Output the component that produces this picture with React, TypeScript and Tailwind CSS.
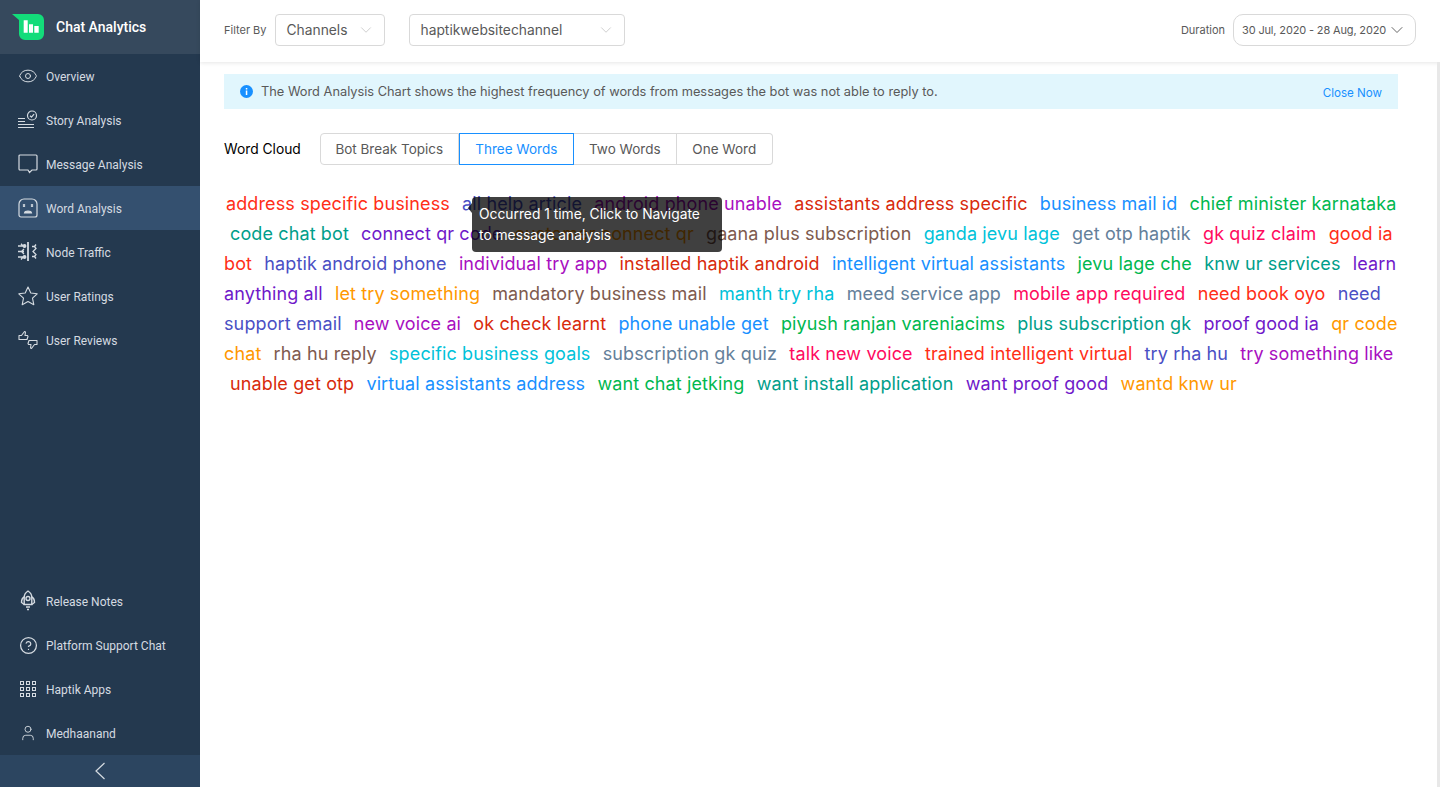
import { ChevronDown, CircleHelp, Eye, User } from "lucide-react";
import type { ReactNode } from "react";

const COLORS = [
  "text-[#ff2e17]",
  "text-[#4a4fc4]",
  "text-[#a80fc0]",
  "text-[#d82a0c]",
  "text-[#1890ff]",
  "text-[#00b84f]",
  "text-[#009e8a]",
  "text-[#6f19c9]",
  "text-[#ff9800]",
  "text-[#7e5a4e]",
  "text-[#00c2d9]",
  "text-[#64809a]",
  "text-[#ff0a5e]",
];

const WORDS = [
  "address specific business",
  "all help article",
  "android phone unable",
  "assistants address specific",
  "business mail id",
  "chief minister karnataka",
  "code chat bot",
  "connect qr code",
  "customer connect qr",
  "gaana plus subscription",
  "ganda jevu lage",
  "get otp haptik",
  "gk quiz claim",
  "good ia bot",
  "haptik android phone",
  "individual try app",
  "installed haptik android",
  "intelligent virtual assistants",
  "jevu lage che",
  "knw ur services",
  "learn anything all",
  "let try something",
  "mandatory business mail",
  "manth try rha",
  "meed service app",
  "mobile app required",
  "need book oyo",
  "need support email",
  "new voice ai",
  "ok check learnt",
  "phone unable get",
  "piyush ranjan vareniacims",
  "plus subscription gk",
  "proof good ia",
  "qr code chat",
  "rha hu reply",
  "specific business goals",
  "subscription gk quiz",
  "talk new voice",
  "trained intelligent virtual",
  "try rha hu",
  "try something like",
  "unable get otp",
  "virtual assistants address",
  "want chat jetking",
  "want install application",
  "want proof good",
  "wantd knw ur",
];

function StoryIcon() {
  return (
    <svg width="20" height="20" viewBox="0 0 20 20" fill="none" stroke="currentColor" strokeWidth="1.2">
      <path d="M0 8.500h7M0 11.500h7M0 14.500h16M0 17.500h16" />
      <circle cx="14" cy="5.500" r="4.500" />
      <path d="M12 5.700l1.500 1.400 2.600-3" />
    </svg>
  );
}

function MessageIcon() {
  return (
    <svg width="20" height="20" viewBox="0 0 20 20" fill="none" stroke="currentColor" strokeWidth="1.2">
      <path d="M2 1h16a1 1 0 0 1 1 1v13a1 1 0 0 1-1 1h-4l-2.500 2.500L10 16H2a1 1 0 0 1-1-1V2a1 1 0 0 1 1-1z" />
    </svg>
  );
}

function SadIcon() {
  return (
    <svg width="20" height="20" viewBox="0 0 20 20" fill="none" stroke="currentColor" strokeWidth="1.2">
      <path d="M6 1h8a5 5 0 0 1 5 5v11a2 2 0 0 1-2 2H3a2 2 0 0 1-2-2V6a5 5 0 0 1 5-5z" />
      <path d="M5 6.500l2 2M7 6.500l-2 2M13 6.500l2 2M15 6.500l-2 2" />
      <path d="M6.500 15c.5-2.500 6.500-2.500 7 0z" fill="currentColor" />
    </svg>
  );
}

function NodeIcon() {
  return (
    <svg width="20" height="20" viewBox="0 0 20 20" fill="none" stroke="currentColor" strokeWidth="1.3">
      <path d="M10 0v19" strokeWidth="1.800" />
      <path d="M0 4h5M5 4L3 1.800M0 9.500h6M3.500 9.500L6 7M0 15h5M5 15l-2 2.500M3.500 9.500L6 12" />
      <circle cx="6.500" cy="4" r="1.300" fill="currentColor" />
      <circle cx="6.500" cy="15" r="1.300" fill="currentColor" />
      <path d="M14 4.500h2.500l1.500-2M16.500 4.500l1.500 2-3 3 3 3-1.500 2H14M16.500 14.500l1.500 2" />
    </svg>
  );
}

function StarIcon() {
  return (
    <svg width="20" height="20" viewBox="0 0 20 20" fill="none" stroke="currentColor" strokeWidth="1.100" strokeLinejoin="round">
      <path d="M10 1l2.800 6 6.400.800-4.700 4.400 1.300 6.500L10 15.500 4.200 18.700l1.300-6.500L.8 7.800 7.200 7z" />
    </svg>
  );
}

function ReviewsIcon() {
  return (
    <svg width="20" height="20" viewBox="0 0 20 20" fill="none" stroke="currentColor" strokeWidth="1.100" strokeLinejoin="round">
      <path d="M1 5.500h2.500L6.500 1.500l1 .500-.5 3.500h2.500l.5 1-1 3H1z" />
      <path d="M19 10.500h-8l-1 3 .5 1H13l-.5 3.500 1 .5 3-4H19z" />
    </svg>
  );
}

function RocketIcon() {
  return (
    <svg width="20" height="22" viewBox="0 0 20 22" fill="none" stroke="currentColor" strokeWidth="1.400">
      <path d="M10 1c2.500 1.500 3.800 4 3.800 6.500v7H6.200v-7C6.200 5 7.500 2.500 10 1z" />
      <circle cx="10" cy="8.500" r="2" />
      <path d="M6.200 7C4 8 3.500 10 3.500 12.500l2.700 2M13.800 7c2.200 1 2.700 3 2.700 5.500l-2.700 2M8 17h4M9 19.500h2" />
    </svg>
  );
}

function AppsIcon() {
  const cells = [2.5, 8.5, 14.5];
  return (
    <svg width="20" height="20" viewBox="0 0 20 20" fill="none" stroke="currentColor" strokeWidth="1">
      {cells.map((y) =>
        cells.map((x) => <rect key={`${x}-${y}`} x={x} y={y} width="3" height="3" />),
      )}
    </svg>
  );
}

function NavItem({ icon, label, active }: { icon: ReactNode; label: string; active?: boolean }) {
  return (
    <div className={`flex h-11 items-center gap-2 pl-[18px] ${active ? "bg-[#34506f]" : ""}`}>
      <span className="flex w-5 shrink-0 items-center justify-center">{icon}</span>
      <span className="pt-0.5 text-xs">{label}</span>
    </div>
  );
}

function Select({ label, className }: { label: string; className: string }) {
  return (
    <div className={`flex h-8 items-center justify-between rounded border border-[#d9d9d9] bg-white pl-[11px] pr-[9px] text-[13.8px] text-[#595959] ${className}`}>
      <span>{label}</span>
      <ChevronDown size={18} strokeWidth={1} className="text-[#bfbfbf]" />
    </div>
  );
}

function Tab({ label, active, className }: { label: string; active?: boolean; className: string }) {
  return (
    <div
      className={`flex h-8 items-center justify-center border text-[13.5px] ${
        active ? "border-[#1890ff] text-[#1890ff]" : "border-[#d9d9d9] text-[#595959]"
      } ${className}`}
    >
      {label}
    </div>
  );
}

export default function App() {
  return (
    <div className="flex h-[787px] w-[1440px] overflow-hidden bg-white font-['Inter',sans-serif]">
      <aside className="flex w-[200px] shrink-0 flex-col bg-[#24394f] font-['Roboto',sans-serif] text-[#d5dbe1]">
        <div className="flex h-[54px] items-center gap-3 bg-[#36495d] pl-3">
          <svg width="32" height="26" viewBox="0 0 32 26">
            <path d="M0 0h26a6 6 0 0 1 6 6v14a6 6 0 0 1-6 6H13a6 6 0 0 1-6-6V6z" fill="#13dc7a" />
            <path d="M11.700 6.300h4v12.400h-4zM17 10.300h4v8.400h-4zM22.300 12h4.400v6.700h-4.400z" fill="#fff" />
          </svg>
          <span className="text-sm font-medium text-white">Chat Analytics</span>
        </div>
        <nav>
          <NavItem icon={<Eye size={20} strokeWidth={1.2} />} label="Overview" />
          <NavItem icon={<StoryIcon />} label="Story Analysis" />
          <NavItem icon={<MessageIcon />} label="Message Analysis" />
          <NavItem icon={<SadIcon />} label="Word Analysis" active />
          <NavItem icon={<NodeIcon />} label="Node Traffic" />
          <NavItem icon={<StarIcon />} label="User Ratings" />
          <NavItem icon={<ReviewsIcon />} label="User Reviews" />
        </nav>
        <div className="mt-auto">
          <NavItem icon={<RocketIcon />} label="Release Notes" />
          <NavItem icon={<CircleHelp size={19} strokeWidth={1.6} />} label="Platform Support Chat" />
          <NavItem icon={<AppsIcon />} label="Haptik Apps" />
          <NavItem icon={<User size={18} strokeWidth={1.2} />} label="Medhaanand" />
          <div className="flex h-8 items-center justify-center bg-[#2c4560]">
            <svg width="12" height="18" viewBox="0 0 12 18" fill="none" stroke="currentColor" strokeWidth="1.200">
              <path d="M10.500 1L2 9l8.500 8" />
            </svg>
          </div>
        </div>
      </aside>

      <main className="flex min-w-0 flex-1 flex-col">
        <header className="flex h-[62px] shrink-0 items-center pb-0.5 pl-6 pr-[24px] shadow-[0_1px_4px_rgba(0,0,0,0.1)]">
          <span className="mr-2 text-[11px] text-[#595959]">Filter By</span>
          <Select label="Channels" className="w-[110px]" />
          <Select label="haptikwebsitechannel" className="ml-6 w-[216px]" />
          <span className="ml-auto mr-2 text-[11px] text-[#595959]">Duration</span>
          <div className="flex h-8 w-[183px] items-center justify-between rounded-[10px] border border-[#d9d9d9] pl-2 pr-2 text-[11px] tracking-[-0.15px] whitespace-nowrap text-[#595959]">
            <span>30 Jul, 2020 - 28 Aug, 2020</span>
            <ChevronDown size={20} strokeWidth={1.1} />
          </div>
        </header>

        <div className="flex min-h-0 flex-1">
          <div className="min-w-0 flex-1 pl-6 pr-[39px] pt-3">
            <div className="flex h-[35px] items-center justify-between bg-[#e1f6fd] pl-4 pr-4">
              <div className="flex items-center gap-2">
                <svg width="13" height="13" viewBox="0 0 13 13">
                  <circle cx="6.500" cy="6.500" r="6.500" fill="#1890ff" />
                  <rect x="5.800" y="5.500" width="1.500" height="4.500" fill="#fff" />
                  <rect x="5.800" y="3" width="1.500" height="1.500" fill="#fff" />
                </svg>
                <span className="text-[12.8px] text-[#595959]">
                  The Word Analysis Chart shows the highest frequency of words from messages the bot was not able to reply to.
                </span>
              </div>
              <span className="pt-1 text-[11.6px] text-[#1890ff]">Close Now</span>
            </div>

            <div className="mt-6 flex items-center">
              <span className="mr-[19px] text-[13.8px] text-black">Word Cloud</span>
              <Tab label="Bot Break Topics" className="w-[139px] rounded-l" />
              <Tab label="Three Words" active className="w-[115px]" />
              <Tab label="Two Words" className="w-[103px] border-l-0" />
              <Tab label="One Word" className="w-[96px] rounded-r border-l-0" />
            </div>

            <div className="relative mt-6">
              <p className="text-left text-lg leading-[30px] tracking-[0.12px]">
                {WORDS.map((word, i) => (
                  <span key={word}>
                    <span className={`pr-px ${i === 0 ? "pl-0.5" : "pl-1.5"} ${COLORS[i % COLORS.length]}`}>{word}</span>{" "}
                  </span>
                ))}
              </p>
              <div className="absolute left-[248px] top-2 w-[250px] rounded bg-[rgba(0,0,0,0.75)] px-[7px] pb-1.5 pt-[7px] text-[13.8px] leading-[21px] text-white">
                <span className="absolute left-[-4px] top-1.5 h-0 w-0 border-y-[5px] border-r-[4px] border-y-transparent border-r-[rgba(0,0,0,0.75)]" />
                Occurred 1 time, Click to Navigate to message analysis
              </div>
            </div>
          </div>
          <div className="w-[3px] shrink-0 bg-[#e8e8e8]" />
        </div>
      </main>
    </div>
  );
}
